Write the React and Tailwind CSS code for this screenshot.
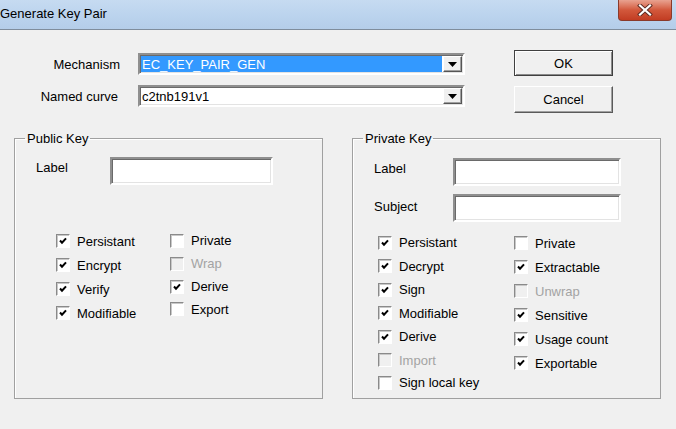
import React from 'react';

const Check = ({ checked, disabled, label, className = '' }) => (
  <div className={`flex items-center ${className}`}>
    <div
      className={`w-[14px] h-[14px] flex items-center justify-center border border-t-[#8a8a8a] border-l-[#8a8a8a] border-r-[#ffffff] border-b-[#ffffff] shadow-[inset_1px_1px_0_#c8c8c8] ${
        disabled ? 'bg-[#f0f0f0]' : 'bg-white'
      }`}
    >
      {checked && (
        <svg width="8" height="8" viewBox="0 0 8 8">
          <path d="M1 3.5 L3 5.7 L7 1.3" stroke="#000" strokeWidth="2" fill="none" />
        </svg>
      )}
    </div>
    <span className={`ml-[7px] ${disabled ? 'text-[#a3a3a3]' : 'text-black'}`}>{label}</span>
  </div>
);

const TextBox = ({ className = '' }) => (
  <div
    className={`bg-white border-2 border-t-[#8f8f8f] border-l-[#8f8f8f] border-r-[#ffffff] border-b-[#ffffff] shadow-[inset_1px_1px_0_#6a6a6a,inset_-1px_-1px_0_#e3e3e3] ${className}`}
  />
);

const Combo = ({ value, selected }) => (
  <div className="w-[327px] h-[22px] bg-white border-2 border-t-[#8f8f8f] border-l-[#8f8f8f] border-r-[#ffffff] border-b-[#ffffff] shadow-[inset_1px_1px_0_#6a6a6a,inset_-1px_-1px_0_#e3e3e3] flex items-stretch p-[1px]">
    <div
      className={`flex-1 flex items-center pl-[1px] ${selected ? 'bg-[#3399ff] text-white' : 'text-black'}`}
    >
      {value}
    </div>
    <div className="w-[19px] ml-[1px] bg-[#f0f0f0] border border-t-[#ffffff] border-l-[#ffffff] border-r-[#555555] border-b-[#555555] shadow-[inset_-1px_-1px_0_#a0a0a0] flex items-center justify-center">
      <svg width="9" height="5" viewBox="0 0 9 5">
        <path d="M0 0 H9 L4.5 5 Z" fill="#000" />
      </svg>
    </div>
  </div>
);

const GroupBox = ({ title, children }) => (
  <fieldset className="w-[309px] h-[268px] border border-[#a0a0a0] shadow-[inset_1px_1px_0_#ffffff]">
    <legend className="ml-[10px] px-[2px] leading-[15px]">{title}</legend>
    {children}
  </fieldset>
);

export default function App() {
  return (
    <div className="w-[676px] h-[429px] bg-[#f0f0f0] overflow-hidden text-[13px] leading-[15px] text-black font-['Liberation_Sans',Arial,sans-serif]">
      {/* title bar */}
      <div className="h-[30px] border-b border-[#7f8d9c] bg-gradient-to-b from-[#c6dbf1] via-[#bcd4ee] to-[#b4cde9] flex items-start justify-between">
        <div className="pt-[6px] text-[13px] text-black">Generate Key Pair</div>
        <div className="mr-[4px] w-[54px] h-[21px] rounded-b-[4px] border border-t-0 border-[#8a3a2a] bg-gradient-to-b from-[#e8a290] via-[#d2583c] to-[#c23c22] flex items-center justify-center">
          <svg width="16" height="12" viewBox="0 0 16 12">
            <path d="M3 1.5 L13 10.5 M13 1.5 L3 10.5" stroke="#5b2a22" strokeWidth="4" strokeLinecap="square" />
            <path d="M3 1.5 L13 10.5 M13 1.5 L3 10.5" stroke="#ffffff" strokeWidth="2.2" strokeLinecap="square" />
          </svg>
        </div>
      </div>

      {/* top row */}
      <div className="flex pt-[23px]">
        <div className="flex flex-col gap-[10px]">
          <div className="flex items-center">
            <div className="w-[120px] text-right">Mechanism</div>
            <div className="ml-[18px]">
              <Combo value="EC_KEY_PAIR_GEN" selected />
            </div>
          </div>
          <div className="flex items-center">
            <div className="w-[118px] text-right">Named curve</div>
            <div className="ml-[20px]">
              <Combo value="c2tnb191v1" />
            </div>
          </div>
        </div>
        <div className="ml-[49px] -mt-[3px] flex flex-col gap-[10px]">
          <button className="w-[99px] h-[26px] bg-[#f0f0f0] border border-[#404040] shadow-[inset_1px_1px_0_#ffffff,inset_-1px_-1px_0_#8a8a8a]">
            OK
          </button>
          <button className="w-[99px] h-[27px] bg-[#f0f0f0] border border-t-[#ffffff] border-l-[#ffffff] border-r-[#5a5a5a] border-b-[#5a5a5a] shadow-[inset_-1px_-1px_0_#a0a0a0]">
            Cancel
          </button>
        </div>
      </div>

      {/* group boxes */}
      <div className="flex gap-[29px] pl-[14px] mt-[18px]">
        <GroupBox title="Public Key">
          <div className="flex items-start pl-[21px] mt-[11px]">
            <div className="w-[74px] pt-[3px]">Label</div>
            <TextBox className="w-[163px] h-[28px]" />
          </div>
          <div className="flex pl-[41px] mt-[44px]">
            <div className="w-[114px] flex flex-col">
              <Check className="h-[24px]" checked label="Persistant" />
              <Check className="h-[24px]" checked label="Encrypt" />
              <Check className="h-[24px]" checked label="Verify" />
              <Check className="h-[24px]" checked label="Modifiable" />
            </div>
            <div className="flex flex-col">
              <Check className="h-[23px]" label="Private" />
              <Check className="h-[23px]" disabled label="Wrap" />
              <Check className="h-[23px]" checked label="Derive" />
              <Check className="h-[22px]" label="Export" />
            </div>
          </div>
        </GroupBox>

        <GroupBox title="Private Key">
          <div className="flex items-start pl-[21px] mt-[12px]">
            <div className="w-[79px] pt-[3px]">Label</div>
            <TextBox className="w-[168px] h-[28px]" />
          </div>
          <div className="flex items-start pl-[21px] mt-[8px]">
            <div className="w-[79px] pt-[5px]">Subject</div>
            <TextBox className="w-[168px] h-[28px]" />
          </div>
          <div className="flex pl-[25px] mt-[9px]">
            <div className="w-[136px] flex flex-col">
              <Check className="h-[23.5px]" checked label="Persistant" />
              <Check className="h-[23.5px]" checked label="Decrypt" />
              <Check className="h-[23.5px]" checked label="Sign" />
              <Check className="h-[23.5px]" checked label="Modifiable" />
              <Check className="h-[23.5px]" checked label="Derive" />
              <Check className="h-[23.5px]" disabled label="Import" />
              <Check className="h-[21px]" label="Sign local key" />
            </div>
            <div className="flex flex-col">
              <Check className="h-[24px]" label="Private" />
              <Check className="h-[24px]" checked label="Extractable" />
              <Check className="h-[24px]" disabled label="Unwrap" />
              <Check className="h-[24px]" checked label="Sensitive" />
              <Check className="h-[24px]" checked label="Usage count" />
              <Check className="h-[24px]" checked label="Exportable" />
            </div>
          </div>
        </GroupBox>
      </div>
    </div>
  );
}
